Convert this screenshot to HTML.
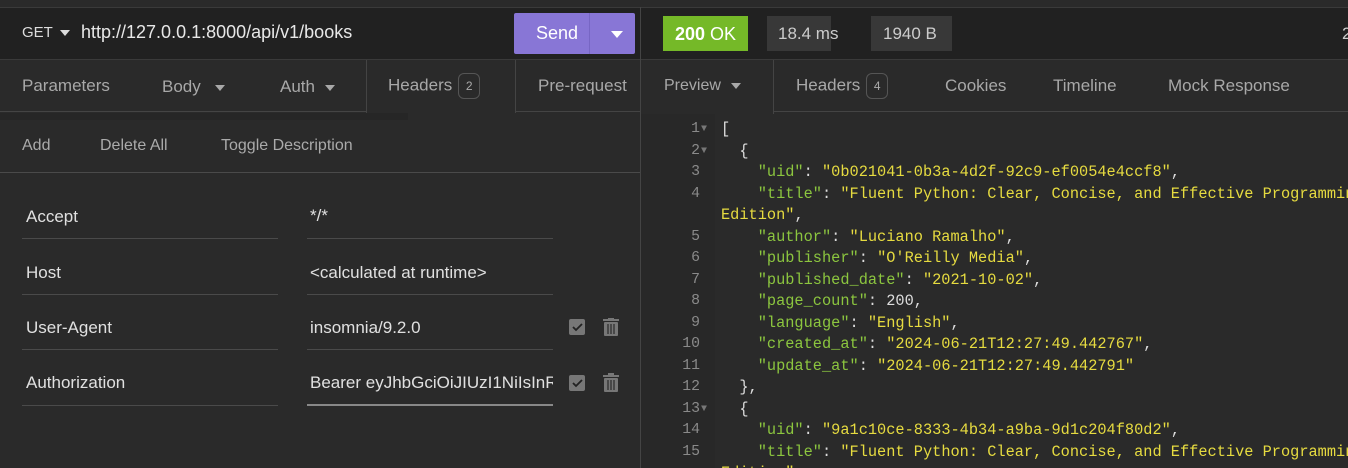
<!DOCTYPE html>
<html style="width:1348px;height:468px;overflow:hidden"><head><meta charset="utf-8"><style>
*{margin:0;padding:0;box-sizing:border-box}
body{width:1348px;height:468px;background:#2a2a2a;font-family:"Liberation Sans",sans-serif;color:#ddd;position:relative;overflow:hidden}
.abs{position:absolute}
.top{left:0;top:7px;width:1348px;height:53px;background:#212121;border-top:1px solid #3a3a3a;border-bottom:1px solid #3a3a3a}
.t{position:absolute;white-space:nowrap}
.tabs{color:#a8a8a8;font-size:17px}
.badge{display:inline-block;border:1px solid #555;border-radius:6px;font-size:12px;width:22px;height:26px;line-height:24px;text-align:center;vertical-align:middle;color:#aaa;margin-left:6px}
.caret{display:inline-block;width:0;height:0;border-left:5px solid transparent;border-right:5px solid transparent;border-top:6px solid currentColor;vertical-align:middle;margin-left:10px}
.line{position:absolute;height:1px;background:#4a4a4a}
.kv{font-size:17px;color:#e0e0e0}
pre{font-family:"Liberation Mono",monospace;font-size:15.3px;line-height:21.5px}
.k{color:#8cc63f}.s{color:#e6db40}.p{color:#ddd}
.gut{color:#8a8a8a;text-align:right;font-size:14.8px}
</style></head><body>
<div class="abs top"></div>
<div class="abs" style="left:640px;top:7px;width:1px;height:461px;background:#444"></div>
<div class="t" style="left:22px;top:24px;font-size:15px;color:#ddd">GET<span class="caret" style="margin-left:7px;border-top-color:#ddd"></span></div>
<div class="t" style="left:81px;top:22px;font-size:18px;color:#e8e8e8">http://127.0.0.1:8000/api/v1/books</div>
<div class="abs" style="left:514px;top:13px;width:121px;height:41px;background:#8876d6;border-radius:2px"></div>
<div class="abs" style="left:589px;top:13px;width:1px;height:41px;background:#7766c4"></div>
<div class="t" style="left:536px;top:23px;font-size:18px;color:#fff">Send</div>
<div class="abs" style="left:611px;top:31px;border-left:6px solid transparent;border-right:6px solid transparent;border-top:7px solid #fff"></div>
<div class="abs" style="left:663px;top:16px;width:85px;height:35px;background:#75b928"></div>
<div class="t" style="left:675px;top:24px;font-size:18px;color:#fff"><b>200</b> OK</div>
<div class="abs" style="left:767px;top:16px;width:64px;height:35px;background:#383838"></div>
<div class="t" style="left:778px;top:24px;font-size:17px;color:#ccc">18.4 ms</div>
<div class="abs" style="left:871px;top:16px;width:81px;height:35px;background:#383838"></div>
<div class="t" style="left:883px;top:24px;font-size:17px;color:#ccc">1940 B</div>
<div class="t" style="left:1342px;top:24px;font-size:17px;color:#ccc">2</div>
<div class="abs" style="left:0;top:60px;width:640px;height:52px;border-bottom:1px solid #444"></div>
<div class="abs" style="left:366px;top:60px;width:150px;height:53px;background:#2a2a2a;border-left:1px solid #444;border-right:1px solid #444"></div>
<div class="t tabs" style="left:22px;top:76px">Parameters</div>
<div class="t tabs" style="left:162px;top:77px">Body<span class="caret" style="margin-left:14px"></span></div>
<div class="t tabs" style="left:280px;top:77px">Auth<span class="caret"></span></div>
<div class="t tabs" style="left:388px;top:73px">Headers<span class="badge">2</span></div>
<div class="t tabs" style="left:538px;top:76px">Pre-request</div>
<div class="abs" style="left:0;top:113px;width:408px;height:7px;background:#262626"></div>
<div class="t" style="left:22px;top:137px;font-size:16px;color:#aaa">Add</div>
<div class="t" style="left:100px;top:137px;font-size:16px;color:#aaa">Delete All</div>
<div class="t" style="left:221px;top:137px;font-size:16px;color:#aaa">Toggle Description</div>
<div class="line" style="left:0;top:172px;width:640px"></div>
<div class="t kv" style="left:26px;top:207px">Accept</div>
<div class="t kv" style="left:310px;top:206px">*/*</div>
<div class="t kv" style="left:26px;top:263px">Host</div>
<div class="t kv" style="left:310px;top:263px">&lt;calculated at runtime&gt;</div>
<div class="t kv" style="left:26px;top:318px">User-Agent</div>
<div class="t kv" style="left:310px;top:318px">insomnia/9.2.0</div>
<div class="t kv" style="left:26px;top:373px">Authorization</div>
<div class="t kv" style="left:310px;top:373px;width:243px;overflow:hidden">Bearer eyJhbGciOiJIUzI1NiIsInR5cCI6</div>
<div class="line" style="left:22px;top:238px;width:256px"></div><div class="line" style="left:307px;top:238px;width:246px"></div>
<div class="line" style="left:22px;top:294px;width:256px"></div><div class="line" style="left:307px;top:294px;width:246px"></div>
<div class="line" style="left:22px;top:349px;width:256px"></div><div class="line" style="left:307px;top:349px;width:246px"></div>
<div class="line" style="left:22px;top:405px;width:256px"></div><div class="line" style="left:307px;top:404px;width:246px;height:2px;background:#888"></div>
<svg class="abs" style="left:568px;top:318px" width="60" height="80" viewBox="0 0 60 80">
<g><rect x="1" y="1" width="16" height="16" rx="2" fill="#777"/><path d="M5 9l3 3 6-6" stroke="#222" stroke-width="1.8" fill="none"/>
<rect x="35" y="1" width="16" height="2" fill="#777"/><rect x="40" y="-1" width="6" height="2" fill="#777"/><rect x="36" y="4" width="14" height="14" rx="1" fill="#777"/><path d="M40 6v10M43 6v10M46 6v10" stroke="#2a2a2a" stroke-width="1.2"/></g>
<g transform="translate(0,56)"><rect x="1" y="1" width="16" height="16" rx="2" fill="#777"/><path d="M5 9l3 3 6-6" stroke="#222" stroke-width="1.8" fill="none"/>
<rect x="35" y="1" width="16" height="2" fill="#777"/><rect x="40" y="-1" width="6" height="2" fill="#777"/><rect x="36" y="4" width="14" height="14" rx="1" fill="#777"/><path d="M40 6v10M43 6v10M46 6v10" stroke="#2a2a2a" stroke-width="1.2"/></g>
</svg>
<div class="abs" style="left:641px;top:60px;width:707px;height:52px;border-bottom:1px solid #444"></div>
<div class="abs" style="left:641px;top:60px;width:133px;height:54px;background:#2a2a2a;border-right:1px solid #444"></div>
<div class="t tabs" style="left:664px;top:77px;font-size:16px">Preview<span class="caret"></span></div>
<div class="t tabs" style="left:796px;top:73px">Headers<span class="badge">4</span></div>
<div class="t tabs" style="left:945px;top:76px">Cookies</div>
<div class="t tabs" style="left:1053px;top:76px">Timeline</div>
<div class="t tabs" style="left:1168px;top:76px">Mock Response</div>
<div class="abs" style="left:641px;top:114px;width:74px;height:354px;background:#282828"></div>
<div class="abs" style="left:641px;top:114px;width:707px;height:354px;overflow:hidden">
<pre class="abs gut" style="left:19px;top:5px;width:40px">1
2
3
4

5
6
7
8
9
10
11
12
13
14
15</pre>
<pre class="abs" style="left:60px;top:5px;color:#777;font-size:10px;line-height:21.5px">▼
▼











▼</pre>
<pre class="abs p" style="left:80px;top:5px">[
  {
    <span class="k">"uid"</span>: <span class="s">"0b021041-0b3a-4d2f-92c9-ef0054e4ccf8"</span>,
    <span class="k">"title"</span>: <span class="s">"Fluent Python: Clear, Concise, and Effective Programming, 2nd</span>
<span class="s">Edition"</span>,
    <span class="k">"author"</span>: <span class="s">"Luciano Ramalho"</span>,
    <span class="k">"publisher"</span>: <span class="s">"O'Reilly Media"</span>,
    <span class="k">"published_date"</span>: <span class="s">"2021-10-02"</span>,
    <span class="k">"page_count"</span>: 200,
    <span class="k">"language"</span>: <span class="s">"English"</span>,
    <span class="k">"created_at"</span>: <span class="s">"2024-06-21T12:27:49.442767"</span>,
    <span class="k">"update_at"</span>: <span class="s">"2024-06-21T12:27:49.442791"</span>
  },
  {
    <span class="k">"uid"</span>: <span class="s">"9a1c10ce-8333-4b34-a9ba-9d1c204f80d2"</span>,
    <span class="k">"title"</span>: <span class="s">"Fluent Python: Clear, Concise, and Effective Programming, 2nd</span>
<span class="s">Edition"</span>,</pre>
</div>
</body></html>
